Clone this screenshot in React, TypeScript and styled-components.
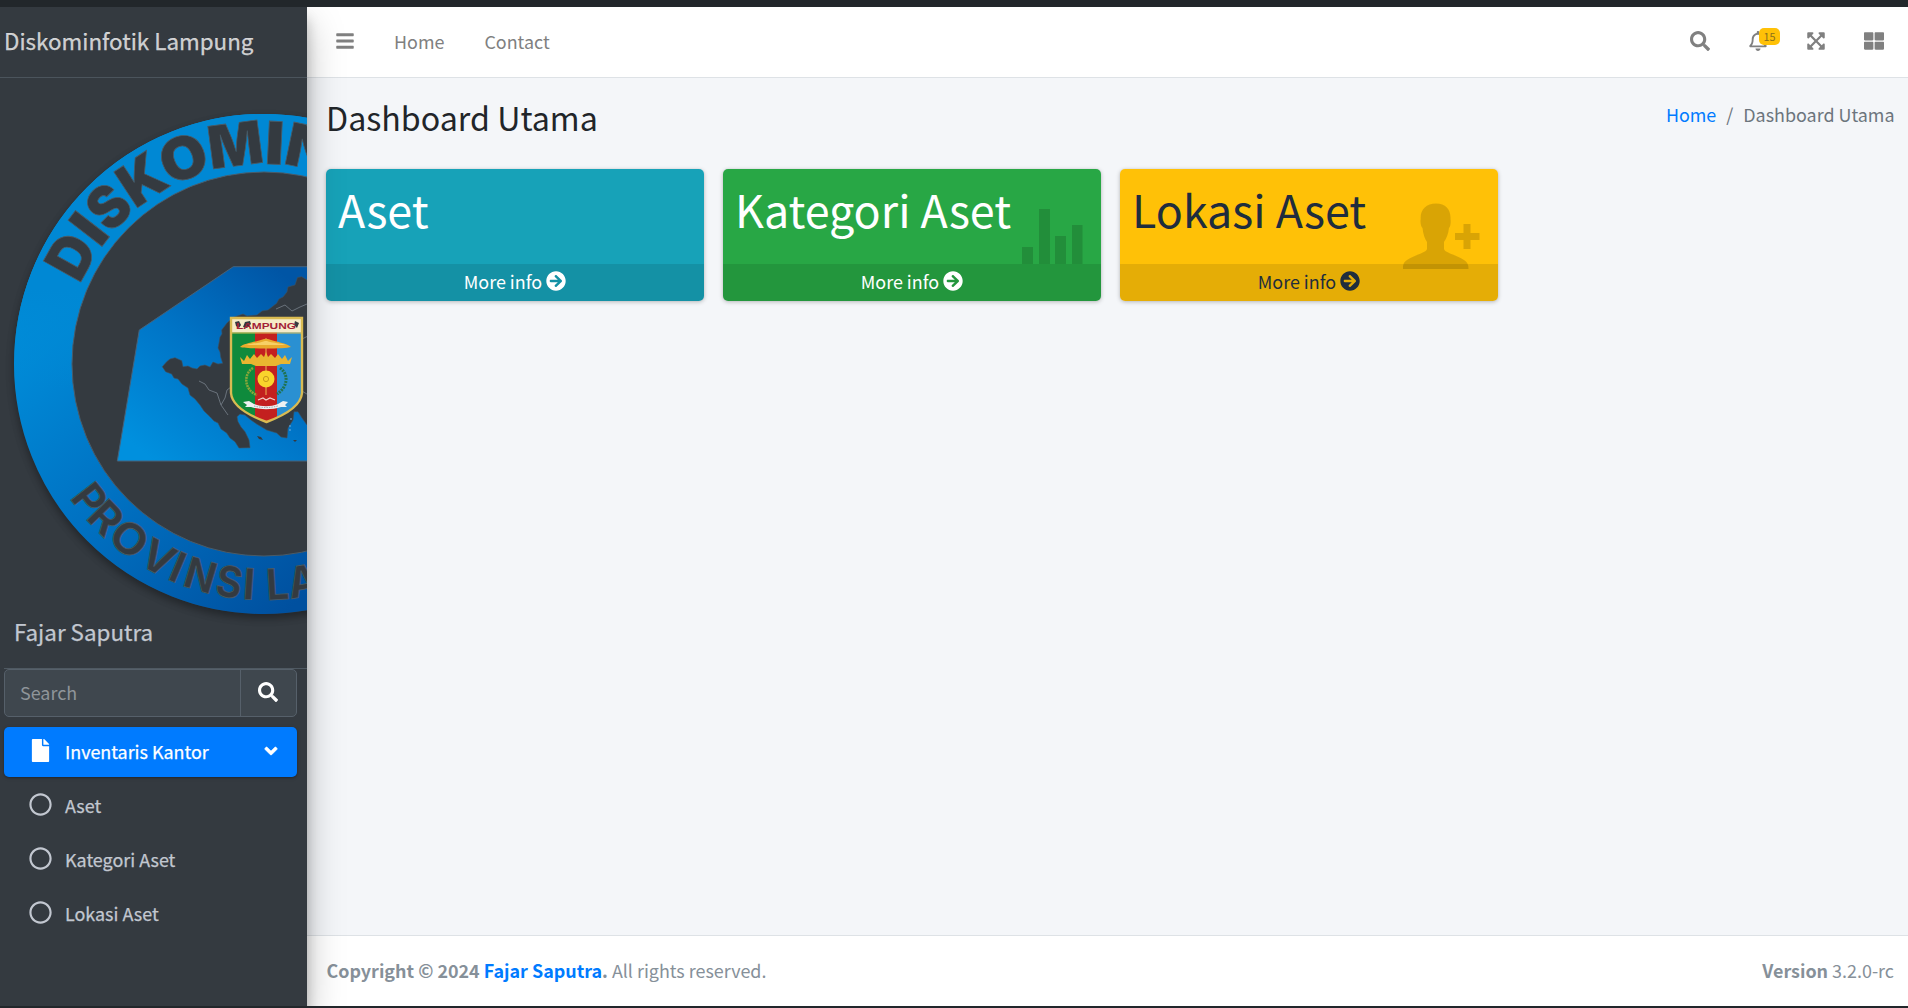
import React from "react";
import styled, { createGlobalStyle, css } from "styled-components";
import {
  FaBars,
  FaSearch,
  FaRegBell,
  FaExpandArrowsAlt,
  FaThLarge,
  FaArrowCircleRight,
  FaFile,
  FaAngleDown,
  FaRegCircle,
} from "react-icons/fa";

const GlobalStyle = createGlobalStyle`
  *, *::before, *::after { box-sizing: border-box; }
  body {
    margin: 0;
    overflow: hidden;
    background: #22272b;
    font-family: "Noto Sans CJK SC", "Noto Sans", sans-serif;
    font-size: 17.92px;
    line-height: 30px;
    color: #212529;
  }
  a { text-decoration: none; color: #007bff; }
  svg { display: block; flex: none; }
`;

const Window = styled.div`
  height: 1008px;
  padding: 7px 0 2px;
  background: #22272b;
`;

const Page = styled.div`
  display: grid;
  grid-template-columns: 307px minmax(0, 1fr);
  height: 999px;
  overflow: hidden;
  background: #f4f6f9;
`;

/* ---------- sidebar ---------- */

const Sidebar = styled.aside`
  z-index: 2;
  min-width: 0;
  background: #343a40;
  color: #c2c7d0;
  -webkit-text-stroke: 0.25px currentColor;
  box-shadow: 0 17px 35px rgba(0, 0, 0, 0.25), 0 12px 12px rgba(0, 0, 0, 0.22);
`;

const Brand = styled.div`
  height: 71px;
  padding: 16px 0 0 4px;
  border-bottom: 1px solid #4b545c;
  font-size: 22.4px;
  line-height: 34px;
  color: rgba(255, 255, 255, 0.75);
  white-space: nowrap;
`;

const UserPanel = styled.div`
  display: flex;
  flex-direction: column;
  height: 591px;
  margin-left: 4px;
  padding: 36px 0 0 10px;
  border-bottom: 1px solid #4f5962;
  overflow: hidden;
`;

const Emblem = styled.div`
  flex: none;
  width: 500px;
  height: 500px;
  border-radius: 50%;
  -webkit-text-stroke: 0;
  box-shadow: 0 4px 8px rgba(0, 0, 0, 0.16), 0 4px 8px rgba(0, 0, 0, 0.23);
`;

const UserName = styled.a`
  font-size: 22.4px;
  line-height: 34px;
  color: #c2c7d0;
`;

const SearchBox = styled.div`
  display: flex;
  width: 293px;
  height: 48px;
  margin: 0 0 10px 4px;
  border: 1px solid #56606a;
  border-radius: 5px;
  background: #3f474e;
  overflow: hidden;
`;

const SearchInput = styled.div`
  flex: 1;
  padding: 7px 0 0 15px;
  color: #8f959a;
  -webkit-text-stroke: 0;
`;

const SearchButton = styled.div`
  display: flex;
  align-items: center;
  justify-content: center;
  width: 56px;
  padding: 0 2px 2px 0;
  border-left: 1px solid #56606a;
  color: #fff;
  font-size: 20px;
`;

const Menu = styled.nav`
  display: flex;
  flex-direction: column;
  gap: 4px;
  width: 293px;
  margin-left: 4px;
`;

const MenuItem = styled.a<{ $active?: boolean }>`
  display: flex;
  align-items: center;
  height: 50px;
  padding: 0 16px 0 20px;
  border-radius: 5px;
  color: #c2c7d0;
  ${(p) =>
    p.$active &&
    css`
      background: #007bff;
      color: #fff;
      box-shadow: 0 1px 4px rgba(0, 0, 0, 0.12), 0 1px 2px rgba(0, 0, 0, 0.24);
    `}
`;

const MenuIcon = styled.span`
  display: flex;
  justify-content: center;
  width: 33px;
  margin: -3px 8px 0 0;
  font-size: 23px;
`;

const MenuLabel = styled.span`
  flex: 1;
  margin-top: -2px;
`;

const MenuArrow = styled.span`
  margin-top: -2px;
  font-size: 20px;
  svg { stroke: currentColor; stroke-width: 14px; }
`;

/* ---------- main column ---------- */

const Main = styled.div`
  display: flex;
  flex-direction: column;
  min-width: 0;
`;

const Navbar = styled.header`
  display: flex;
  align-items: center;
  height: 71px;
  padding: 0 24px 2px 28px;
  background: #fff;
  border-bottom: 1px solid #dee2e6;
  color: #808080;
`;

const NavLinks = styled.div`
  display: flex;
  gap: 40px;
  margin-left: 39px;
  flex: 1;
`;

const NavLink = styled.a`
  color: #808080;
`;

const NavIcons = styled.div`
  display: flex;
  gap: 38px;
`;

const NavIcon = styled.span`
  position: relative;
  font-size: 20px;
`;

const Badge = styled.span`
  position: absolute;
  left: 11px;
  top: -3px;
  width: 21px;
  height: 17px;
  border-radius: 5px;
  background: #ffc107;
  color: #8a6f1b;
  font-size: 10.8px;
  line-height: 17px;
  text-align: center;
`;

const Content = styled.main`
  flex: 1;
  padding: 0 14px 0 19px;
`;

const ContentHeader = styled.div`
  display: flex;
  justify-content: space-between;
  height: 91px;
  padding-top: 18px;
`;

const Title = styled.h1`
  margin: 0;
  font-size: 32.2px;
  font-weight: 400;
  line-height: 43px;
`;

const Breadcrumb = styled.div`
  display: flex;
  gap: 10px;
  padding-top: 3px;
  margin-right: -0.5px;
  color: #6c757d;
`;

const Cards = styled.div`
  display: grid;
  grid-template-columns: repeat(3, 378px);
  gap: 19px;
`;

const Card = styled.section<{ $bg: string; $fg: string }>`
  position: relative;
  display: flex;
  flex-direction: column;
  height: 132px;
  border-radius: 5px;
  overflow: hidden;
  background: ${(p) => p.$bg};
  color: ${(p) => p.$fg};
`;

const CardShell = styled.div`
  border-radius: 5px;
  box-shadow: 0 0 1px rgba(0, 0, 0, 0.125), 0 1px 4px rgba(0, 0, 0, 0.25);
`;

const CardTitle = styled.h2`
  flex: 1;
  margin: 0;
  padding: 10px 0 0 12px;
  font-size: 44.8px;
  font-weight: 400;
  line-height: 60px;
`;

const CardArt = styled.svg`
  position: absolute;
  top: 0;
  left: 0;
  fill: rgba(0, 0, 0, 0.15);
`;

const CardFooter = styled.a<{ $fg: string }>`
  z-index: 1;
  display: flex;
  justify-content: center;
  align-items: center;
  gap: 4px;
  height: 37px;
  padding-bottom: 3px;
  background: rgba(0, 0, 0, 0.1);
  color: ${(p) => p.$fg};
  svg { font-size: 20px; }
`;

const Footer = styled.footer`
  display: flex;
  justify-content: space-between;
  height: 71px;
  padding: 19px 14px 0 19.5px;
  background: #fff;
  border-top: 1px solid #dee2e6;
  color: #869099;
`;

/* ---------- agency emblem ---------- */

type Glyph = [char: string, angle: number, width: number];

const topText: Glyph[] = [
  ["D", -60.8, 41],
  ["I", -52.3, 18],
  ["S", -44.7, 36],
  ["K", -33.5, 44],
  ["O", -21.4, 47],
  ["M", -7.5, 55],
  ["I", 2.8, 19],
  ["N", 11.8, 46],
];

const bottomText: Glyph[] = [
  ["P", 52.2, 27],
  ["R", 45.8, 29],
  ["O", 37.6, 36],
  ["V", 28.6, 32],
  ["I", 23, 12],
  ["N", 16.7, 31],
  ["S", 9.05, 26],
  ["I", 3.9, 12],
  ["L", -3.5, 23],
  ["A", -10.2, 31],
];

const SHIELD = "M231 318H302V393C301 407 280 417 266.500 422C253 417 232 407 231 393Z";

const Logo = () => (
  <svg width="500" height="500" viewBox="14 114 500 500">
    <defs>
      <linearGradient id="ring" gradientUnits="userSpaceOnUse" x1="30" y1="300" x2="300" y2="600">
        <stop offset="0" stopColor="#0090dc" />
        <stop offset="0.5" stopColor="#0071c2" />
        <stop offset="1" stopColor="#00509f" />
      </linearGradient>
      <linearGradient id="ringTop" gradientUnits="userSpaceOnUse" x1="0" y1="290" x2="0" y2="390">
        <stop offset="0" stopColor="#0088d4" />
        <stop offset="1" stopColor="#0088d4" stopOpacity="0" />
      </linearGradient>
      <linearGradient id="panel" gradientUnits="userSpaceOnUse" x1="140" y1="450" x2="285" y2="275">
        <stop offset="0" stopColor="#0090de" />
        <stop offset="0.5" stopColor="#0074c6" />
        <stop offset="1" stopColor="#0055a5" />
      </linearGradient>
      <clipPath id="shieldClip">
        <path d={SHIELD} />
      </clipPath>
    </defs>
    <circle cx="264" cy="364" r="221" fill="none" stroke="url(#ring)" strokeWidth="58" />
    <circle cx="264" cy="364" r="221" fill="none" stroke="url(#ringTop)" strokeWidth="58" />
    <circle cx="264" cy="364" r="192" fill="none" stroke="#4a5b68" strokeWidth="1" />

    <g fill="#343a40" stroke="#4a5a64" strokeWidth="0.8" textAnchor="middle" fontFamily="Inter, sans-serif">
      {topText.map(([c, a, w], i) => (
        <text
          key={i}
          x="264"
          y="164"
          fontSize="59"
          fontWeight="900"
          textLength={w}
          lengthAdjust="spacingAndGlyphs"
          transform={`rotate(${a} 264 364)`}
        >
          {c}
        </text>
      ))}
      {bottomText.map(([c, a, w], i) => (
        <text
          key={i}
          x="264"
          y="600"
          fontSize="43"
          fontWeight="700"
          textLength={w}
          lengthAdjust="spacingAndGlyphs"
          transform={`rotate(${a} 264 364)`}
        >
          {c}
        </text>
      ))}
    </g>

    <path
      d="M139.300 330L233.300 266.700H320V461H117.300Z"
      fill="url(#panel)"
      stroke="#46627a"
      strokeWidth="1"
    />
    <path
      d="M320 280L307 280L301.700 276.700L297.500 277.500L295 285L288 287L287 292L283 297L279 299L276.700 303.300L268 310L262 311L257 315L247 316L243 314L233 317.500L227 323L221.700 330L222 334L220 337L219 343L218 348L220 352L220.700 357L222.700 363.300L218 364L213 362L210 367L205 365L200 366L197 369L192 368L188 366L183 366.700L181.700 360.700L175 357.700L170 359L166.700 361.700L162.300 366.700L165.700 371.700L171.700 374L174 378L178 379L182 384L188 388L190 395L195 399L200 405L204 411L210 416.700L214 421L218 423L221 429L226.700 433L230 438L235 441.700L239 448L250 447.700L249 440L245 431.700L241 427L238 421.700L237 416.700L240 414L245 415L251 420L256.700 424L266.700 430L276.700 433L281 437L287 438L288 428L293 420L294 411.700L298 411.700L302 418L307 425H320Z"
      fill="#343a40"
      stroke="#40505e"
      strokeWidth="0.6"
    />
    <path d="M257 436L261 437L263 440L259 439ZM293 440L297 440L295 442Z" fill="#343a40" />
    <path
      d="M199 381L205 384L209 390L217 393L221 405L228 415M221 405L225 398L227 390L231 387M276 309L285 305L292 311L300 307L307 304M302 339L308 336M302 391L310 396"
      fill="none"
      stroke="#77808a"
      strokeWidth="0.8"
    />
    <path d="M290 425V432M291 418V420" stroke="#7db4de" strokeWidth="0.9" strokeDasharray="2 2" />

    <g clipPath="url(#shieldClip)">
      <rect x="230" y="317" width="25" height="106" fill="#0f8a3c" />
      <rect x="255" y="317" width="22" height="106" fill="#c3201f" />
      <rect x="277" y="317" width="26" height="106" fill="#2a90d2" />
      <rect x="230" y="317" width="73" height="15.500" fill="#f6ecc9" />
    </g>
    <path d={SHIELD} fill="none" stroke="#d9bb52" strokeWidth="2.400" />
    <path d="M231 333H302" stroke="#d9bb52" strokeWidth="1.200" />
    <path d="M235 322L239 321L241 325L239 328L236 326ZM245 322L250 321L251 324L247 328L243 327Z" fill="#343a40" />
    <path d="M295 321L299 323L297 328L294 325Z" fill="#343a40" />
    <text
      x="266"
      y="329.200"
      textAnchor="middle"
      fontFamily="Liberation Sans, sans-serif"
      fontWeight="700"
      fontSize="9.500"
      fill="#a32238"
      textLength="60"
      lengthAdjust="spacingAndGlyphs"
    >
      LAMPUNG
    </text>
    <path d="M266 338V395" stroke="#f0c65a" strokeWidth="0.900" />
    <path d="M240 347C244 343 256 342 264 339H268C276 342 287 343 291 347C285 349 247 349 240 347Z" fill="#e9ab2c" />
    <path d="M246 345C254 343 260 343 265 341L267 341C272 343 280 343 286 345Z" fill="#f7d066" />
    <path
      d="M240 357L244 361L247 355L250 359L254 354L257 358L261 354L264 357L266 352L268 357L271 354L275 358L278 354L282 359L285 355L288 361L292 357L290 364L281 364L276 366H256L251 364L242 364Z"
      fill="#e9b530"
    />
    <path d="M253 368C243 374 244 390 257 395" fill="none" stroke="#8aa63a" strokeWidth="2.500" strokeDasharray="2 0.800" />
    <path d="M280 368C289 374 288 387 277 394" fill="none" stroke="#20724f" strokeWidth="3" strokeDasharray="2 1" />
    <circle cx="266" cy="379" r="8.500" fill="#f9d42c" />
    <circle cx="266" cy="379" r="2.600" fill="none" stroke="#c79a1c" strokeWidth="1" />
    <path d="M258 400L263 398L266 400L270 398L275 400" fill="none" stroke="#f3cfc9" strokeWidth="1.200" />
    <path d="M243 402L249 401L254 404C262 407 270 407 278 404L283 401L288 402L285 405L287 407L281 407C272 410 260 410 251 407L245 407L247 405Z" fill="#eef1f2" />
    <path d="M254 406C262 408 270 408 278 406" fill="none" stroke="#8d9a9f" strokeWidth="0.800" strokeDasharray="1.500 1" />
  </svg>
);

const StatsBars = () => (
  <CardArt width="378" height="132">
    <path d="M299 78h11v17h-11zM316 40h11v55h-11zM332 67h11v28h-11zM349 56h10.500v39h-10.500z" />
  </CardArt>
);

const PersonAdd = () => (
  <CardArt width="378" height="132">
    <path d="M316 34.500C326 34.500 331 41 330.500 50C331 53 330.500 58 329 59C328.500 65 326 70 324 73V80C325 84 337 86 344 91C348 94 348.500 96 348.500 100H283C283 96 283 94 287 91C294 86 306 84 307 80V73C305 70 303 65 302.500 59C301 58 300 53 300.700 50C300 41 306 34.500 316 34.500Z" />
    <path d="M343.500 55h7v9h9v7h-9v9h-7v-9h-8.500v-7h8.500z" />
  </CardArt>
);

const cards = [
  { title: "Aset", bg: "#17a2b8", fg: "#fff", art: null },
  { title: "Kategori Aset", bg: "#28a745", fg: "#fff", art: <StatsBars /> },
  { title: "Lokasi Aset", bg: "#ffc107", fg: "#1f2d3d", art: <PersonAdd /> },
];

export default function App() {
  return (
    <Window>
      <GlobalStyle />
      <Page>
        <Sidebar>
          <Brand>Diskominfotik Lampung</Brand>
          <UserPanel>
            <Emblem>
              <Logo />
            </Emblem>
            <UserName>Fajar Saputra</UserName>
          </UserPanel>
          <SearchBox>
            <SearchInput>Search</SearchInput>
            <SearchButton>
              <FaSearch />
            </SearchButton>
          </SearchBox>
          <Menu>
            <MenuItem $active>
              <MenuIcon>
                <FaFile />
              </MenuIcon>
              <MenuLabel>Inventaris Kantor</MenuLabel>
              <MenuArrow>
                <FaAngleDown />
              </MenuArrow>
            </MenuItem>
            {["Aset", "Kategori Aset", "Lokasi Aset"].map((label) => (
              <MenuItem key={label}>
                <MenuIcon>
                  <FaRegCircle />
                </MenuIcon>
                <MenuLabel>{label}</MenuLabel>
              </MenuItem>
            ))}
          </Menu>
        </Sidebar>

        <Main>
          <Navbar>
            <NavIcon>
              <FaBars />
            </NavIcon>
            <NavLinks>
              <NavLink>Home</NavLink>
              <NavLink>Contact</NavLink>
            </NavLinks>
            <NavIcons>
              <NavIcon>
                <FaSearch />
              </NavIcon>
              <NavIcon>
                <FaRegBell />
                <Badge>15</Badge>
              </NavIcon>
              <NavIcon>
                <FaExpandArrowsAlt />
              </NavIcon>
              <NavIcon>
                <FaThLarge />
              </NavIcon>
            </NavIcons>
          </Navbar>

          <Content>
            <ContentHeader>
              <Title>Dashboard Utama</Title>
              <Breadcrumb>
                <a>Home</a>
                <span>/</span>
                <span>Dashboard Utama</span>
              </Breadcrumb>
            </ContentHeader>
            <Cards>
              {cards.map((c) => (
                <CardShell key={c.title}>
                  <Card $bg={c.bg} $fg={c.fg}>
                    <CardTitle>{c.title}</CardTitle>
                    {c.art}
                    <CardFooter $fg={c.fg}>
                      More info <FaArrowCircleRight />
                    </CardFooter>
                  </Card>
                </CardShell>
              ))}
            </Cards>
          </Content>

          <Footer>
            <span>
              <b>
                Copyright © 2024 <a>Fajar Saputra</a>.
              </b>{" "}
              All rights reserved.
            </span>
            <span>
              <b>Version</b> 3.2.0-rc
            </span>
          </Footer>
        </Main>
      </Page>
    </Window>
  );
}
